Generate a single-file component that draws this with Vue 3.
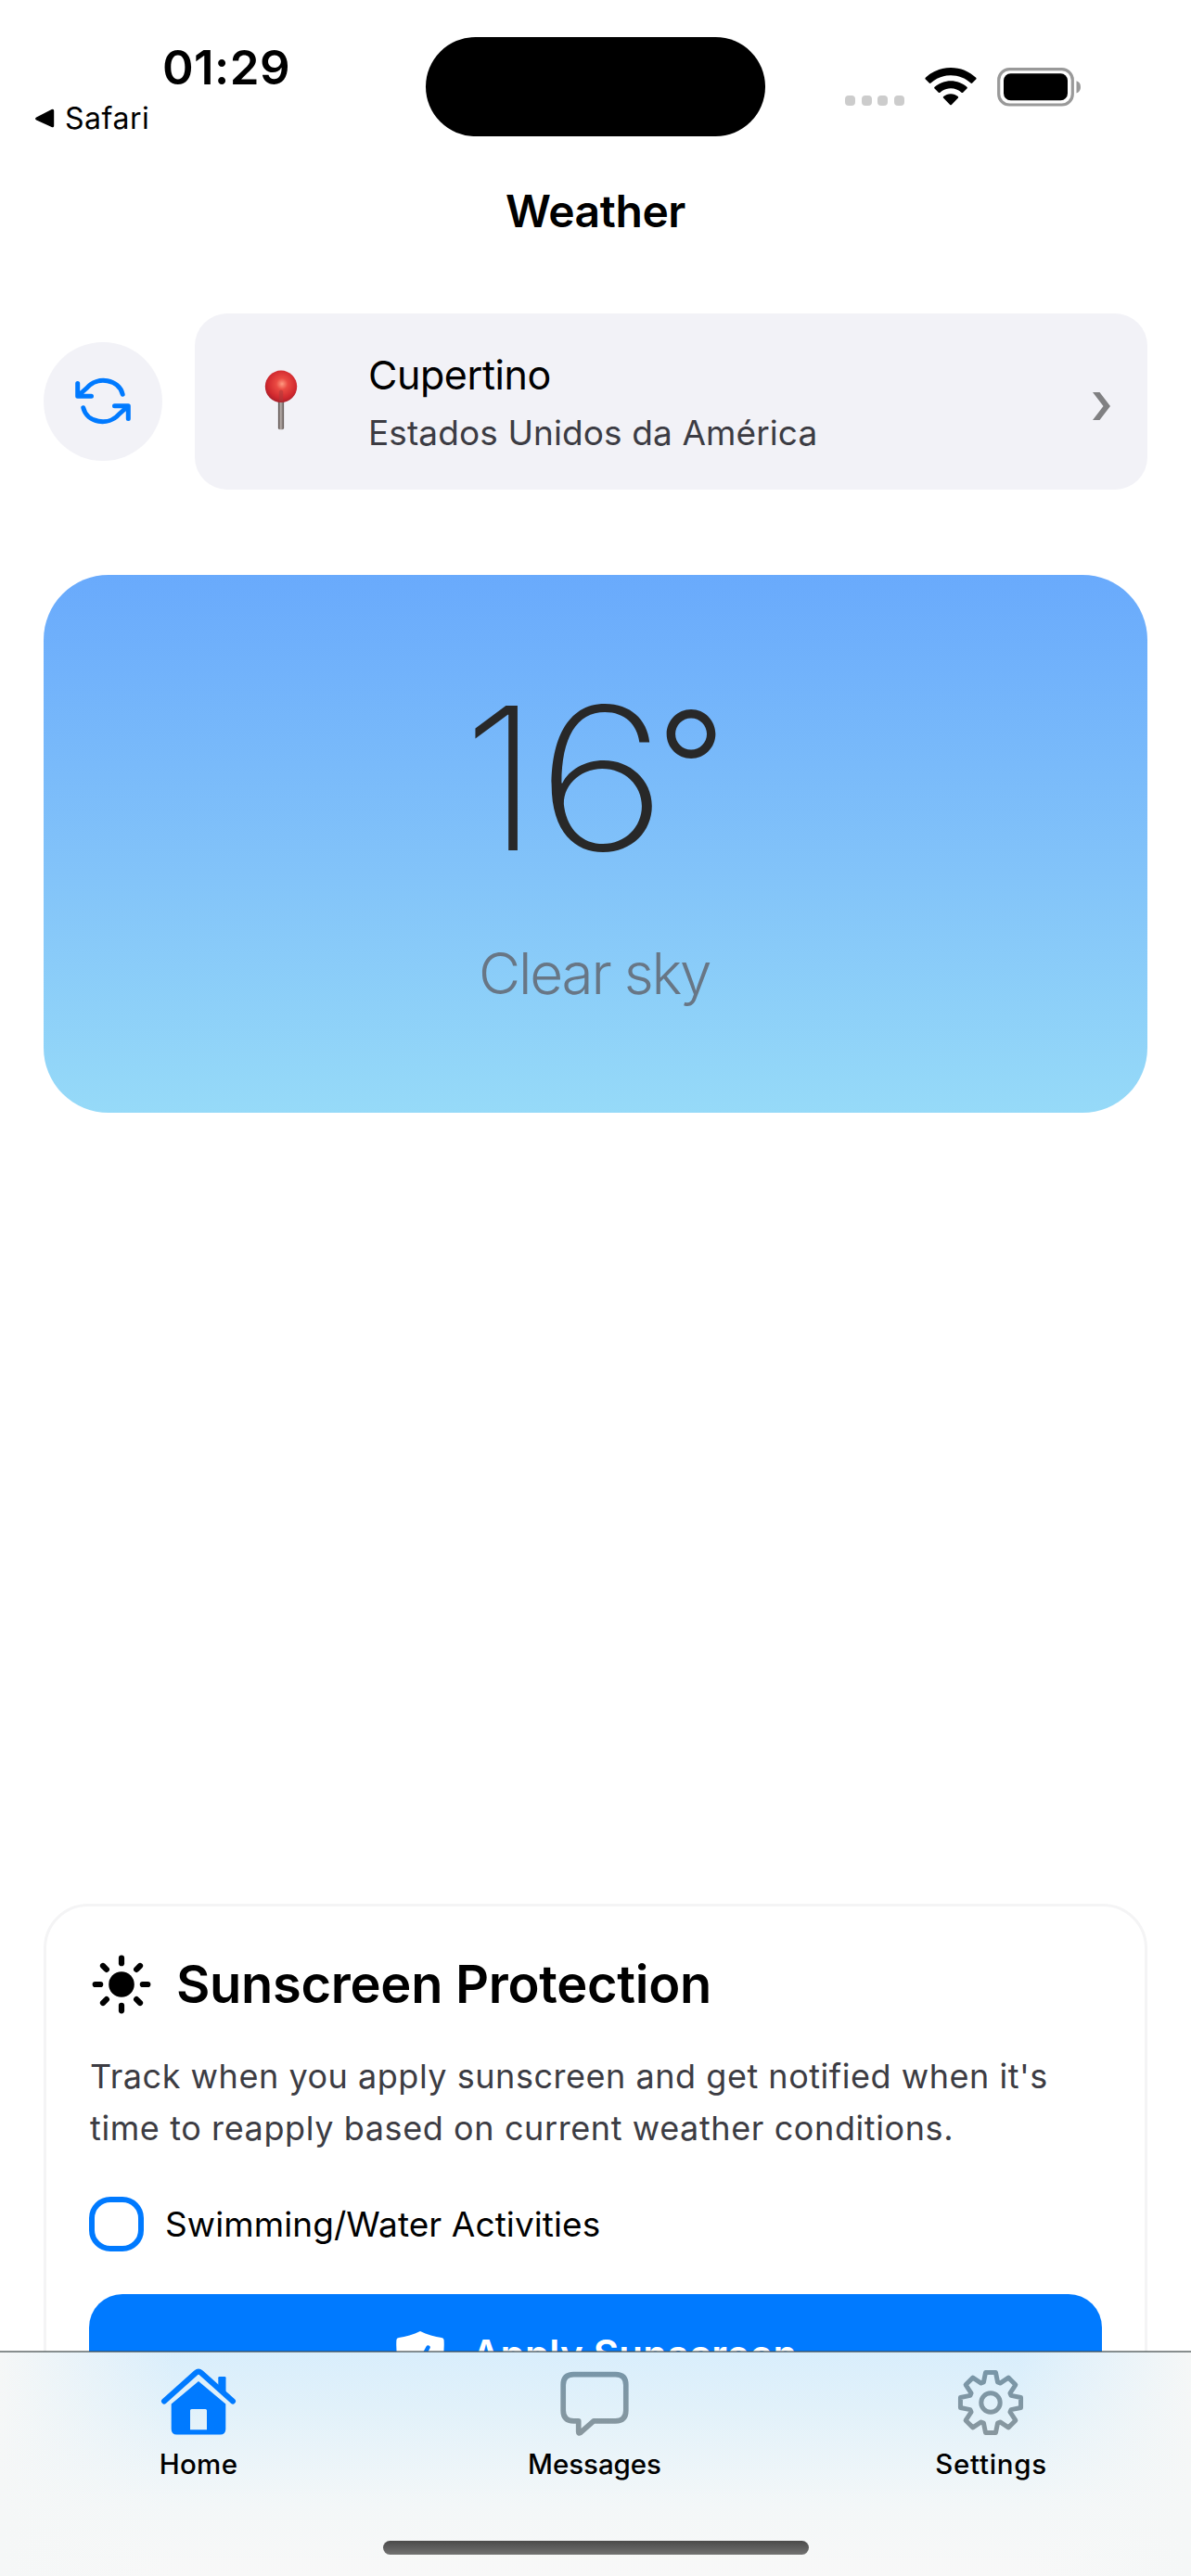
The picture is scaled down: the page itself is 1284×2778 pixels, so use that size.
<script setup>
const polar = (r, deg) => {
  const a = (deg * Math.PI) / 180
  return `${(36 + r * Math.sin(a)).toFixed(2)} ${(36 - r * Math.cos(a)).toFixed(2)}`
}

// Eight-toothed gear outline
const gearPath =
  'M' +
  Array.from({ length: 8 }, (_, i) => i * 45)
    .flatMap((t) => [polar(23.3, t - 19), polar(33, t - 9.5), polar(33, t + 9.5), polar(23.3, t + 19)])
    .join('L') +
  'Z'

const rays = Array.from({ length: 8 }, (_, i) => i * 45)
</script>

<template>
  <div class="screen">
    <header class="status">
      <div class="status-left">
        <div class="time">01:29</div>
        <div class="back">
          <svg width="22" height="22" viewBox="0 0 22 22">
            <path d="M2.500 10.200 19 1.600Q20.500 1 20.500 2.600V18.400Q20.500 20 19 19.400L2.500 11.800Q1 11 2.500 10.200Z" stroke="#000" stroke-width="1.400" />
          </svg>
          <span>Safari</span>
        </div>
      </div>
      <div class="island"></div>
      <div class="status-right">
        <div class="dots"><i></i><i></i><i></i><i></i></div>
        <svg class="wifi" width="56" height="41" viewBox="0 0 56 41">
          <path d="M28 0C17.500 0 8 4 .8 10.800Q0 11.600 .8 12.500L4.800 16.600Q5.600 17.400 6.500 16.600C12.300 11.300 19.700 8.300 28 8.300S43.700 11.300 49.500 16.600Q50.400 17.400 51.200 16.600L55.200 12.500Q56 11.600 55.200 10.800C48 4 38.500 0 28 0Z" />
          <path d="M28 14.200C21.400 14.200 15.300 16.600 10.600 20.800Q9.700 21.700 10.600 22.600L14.800 26.700Q15.600 27.500 16.500 26.700C19.600 24 23.600 22.300 28 22.300S36.400 24 39.500 26.700Q40.400 27.500 41.200 26.700L45.400 22.600Q46.300 21.700 45.400 20.800C40.700 16.600 34.600 14.200 28 14.200Z" />
          <path d="M28 28.200C25 28.200 22.300 29.300 20.200 31Q19.300 31.900 20.200 32.800L27.200 39.900Q28 40.700 28.800 39.900L35.800 32.800Q36.700 31.900 35.800 31C33.700 29.300 31 28.200 28 28.200Z" />
        </svg>
        <svg class="battery" width="91" height="42" viewBox="0 0 91 42">
          <rect x="1.700" y="1.700" width="79.600" height="38.300" rx="11.500" fill="none" stroke="#999" stroke-width="3.200" />
          <rect x="7" y="6.300" width="69" height="29" rx="7.500" />
          <path d="M85.500 14.200Q90 15.500 90 20.800T85.500 27.400Z" fill="#999" />
        </svg>
      </div>
    </header>

    <h1 class="title">Weather</h1>

    <main class="content">
      <section class="location-row">
        <button class="refresh" aria-label="Refresh">
          <svg width="60" height="50" viewBox="0 0 60 50" fill="none" stroke="#007aff" stroke-width="5" stroke-linecap="round" stroke-linejoin="round">
            <path d="M2.700 5.500V19.300H17.500M3.500 18.500L12.500 10.500C24-3 47.500 1 51.200 17.200" />
            <path d="M57.300 43.500V29.700H42.500M56.500 30.500L47.500 38.500C36 52 12.500 48 8.800 31.800" />
          </svg>
        </button>
        <div class="location">
          <svg class="pin" width="36" height="66" viewBox="0 0 36 66">
            <defs>
              <radialGradient id="pinHead" cx=".53" cy=".42" r=".6">
                <stop offset="0" stop-color="#ff9a80" />
                <stop offset=".3" stop-color="#ea4a42" />
                <stop offset=".75" stop-color="#d0282e" />
                <stop offset="1" stop-color="#a51f2a" />
              </radialGradient>
              <linearGradient id="pinStem">
                <stop offset="0" stop-color="#4f4543" />
                <stop offset=".45" stop-color="#b8aeaa" />
                <stop offset="1" stop-color="#5e5452" />
              </linearGradient>
            </defs>
            <rect x="14.900" y="31" width="6.200" height="33.300" rx="1.800" fill="url(#pinStem)" />
            <circle cx="18" cy="17.800" r="17.200" fill="url(#pinHead)" />
            <path d="M15.800 23Q18 20 20.200 23V34H15.800Z" fill="#a83a3c" opacity=".5" />
          </svg>
          <div class="place">
            <div class="city">Cupertino</div>
            <div class="country">Estados Unidos da América</div>
          </div>
          <svg class="chevron" width="19" height="30" viewBox="0 0 19 30">
            <path d="M0 0H7.500L19 15 7.500 30H0L11.500 15Z" fill="#808082" />
          </svg>
        </div>
      </section>

      <section class="weather">
        <div class="temp">1<span class="six">6</span><span class="degree">°</span></div>
        <div class="sky">Clear sky</div>
      </section>

      <section class="sun-card">
        <h2 class="sun-title">
          <svg width="64" height="64" viewBox="-32 -32 64 64">
            <circle r="13.800" />
            <line v-for="r in rays" :key="r" y1="-28.300" y2="-22.800" stroke="#000" stroke-width="6.200" stroke-linecap="round" :transform="`rotate(${r})`" />
          </svg>
          <span>Sunscreen Protection</span>
        </h2>
        <p class="desc">
          <span>Track when you apply sunscreen and get notified when it's</span><br />
          <span class="line-two">time to reapply based on current weather conditions.</span>
        </p>
        <label class="check"><i class="box"></i><span>Swimming/Water Activities</span></label>
        <button class="apply">
          <svg width="52" height="62" viewBox="0 0 52 62">
            <path d="M26 0C33 3.500 42 6.300 49 7Q51.500 7.300 51.600 9.500C53 34 45 54 26 61 7 54-1 34 .4 9.500Q.5 7.300 3 7C10 6.300 19 3.500 26 0Z" fill="#fff" />
            <path d="M17 31.500 23.500 38 34.500 17.500" fill="none" stroke="#007aff" stroke-width="4.500" stroke-linecap="round" stroke-linejoin="round" />
          </svg>
          <span>Apply Sunscreen</span>
        </button>
      </section>
    </main>

    <nav class="tabs">
      <a class="tab">
        <svg width="80" height="72" viewBox="0 0 80 72">
          <path d="M3 34.500 37.300 3.800Q40 1.500 42.700 3.800L77 34.500" fill="none" stroke="#007aff" stroke-width="6" stroke-linecap="round" />
          <path d="M61.300 9.200Q61.300 7.900 62.600 7.900H68.200Q69.500 7.900 69.500 9.200V28L61.300 21Z" fill="#007aff" />
          <path fill-rule="evenodd" d="M40 13 69.300 37.500V64.500Q69.300 70.500 63.300 70.500H16.700Q10.700 70.500 10.700 64.500V37.500ZM32.500 43Q31 43 31 44.500V65.300H49V44.500Q49 43 47.500 43Z" fill="#007aff" />
        </svg>
        <span class="t-home">Home</span>
      </a>
      <a class="tab messages">
        <svg width="80" height="72" viewBox="0 0 80 72" fill="none" stroke="url(#tint)" stroke-width="5.700" stroke-linejoin="round">
          <defs>
            <linearGradient id="tint" x1="0" y1="0" x2="0" y2="72" gradientUnits="userSpaceOnUse">
              <stop offset="0" stop-color="#7896a8" />
              <stop offset="1" stop-color="#89979e" />
            </linearGradient>
          </defs>
          <path d="M17.500 5.700H62.500Q73.800 5.700 73.800 17V44.500Q73.800 55.800 62.500 55.800H39L24.500 68.600Q22.700 69.600 22.700 67.500V55.800H17.500Q6.200 55.800 6.200 44.500V17Q6.200 5.700 17.500 5.700Z" />
        </svg>
        <span class="t-messages">Messages</span>
      </a>
      <a class="tab settings">
        <svg width="72" height="72" viewBox="0 0 72 72" fill="none" stroke="url(#tint)" stroke-width="5" stroke-linejoin="round">
          <path :d="gearPath" />
          <circle cx="36" cy="36" r="10.200" />
        </svg>
        <span class="t-settings">Settings</span>
      </a>
      <div class="home-bar"></div>
    </nav>
  </div>
</template>

<style>
body { background: #fff; }
</style>

<style scoped>
.screen {
  position: relative;
  width: 1284px;
  height: 2778px;
  overflow: hidden;
  background: #fff;
  color: #000;
  font-family: Inter, "Liberation Sans", sans-serif;
  white-space: nowrap;
}
svg { display: block; flex: none; overflow: visible; }
button { border: 0; padding: 0; font: inherit; }
.status { display: grid; grid-template-columns: 459px 366px 1fr; height: 198px; }
.status-left { padding-top: 43px; }
.time { padding-left: 175px; font-size: 51px; font-weight: 600; line-height: 60px; letter-spacing: .44px; }
.back { display: flex; align-items: center; gap: 11px; margin-top: 5px; padding-left: 37px; font-size: 32px; line-height: 40px; letter-spacing: .53px; }
.island { height: 107px; margin-top: 40px; border-radius: 54px; background: #000; }
.status-right { display: flex; align-items: flex-start; padding: 73px 0 0 86px; }
.dots { display: flex; gap: 6.600px; margin-top: 30px; }
.dots i { width: 11px; height: 11px; border-radius: 4px; background: #ccc; }
.wifi { margin-left: 22px; }
.battery { margin-left: 22px; }
.title { margin: 0; text-align: center; font-size: 48px; font-weight: 600; line-height: 60px; letter-spacing: -.4px; }
.content { padding: 80px 47px 0; }
.location-row { display: flex; align-items: center; gap: 35px; height: 190px; }
.refresh { display: grid; place-items: center; width: 128px; height: 128px; border-radius: 50%; background: #f2f2f7; }
.location { display: flex; align-items: center; flex: 1; height: 190px; padding: 0 40px 0 75px; border-radius: 35px; background: #f2f2f7; }
.pin { margin-top: -3px; }
.place { margin-left: 76px; padding-top: 2px; }
.city { font-size: 43px; line-height: 60px; letter-spacing: -.44px; }
.country { margin-top: 5px; font-size: 37px; line-height: 56px; letter-spacing: .1px; color: #3c3c43; }
.chevron { margin: 9px 0 0 auto; }
.weather { height: 580px; margin-top: 92px; border-radius: 70px; background: linear-gradient(#69aafc, #82c3f9 55%, #96daf8); }
.temp { height: 240px; padding: 100px 0 0 452px; font-size: 214px; font-weight: 200; line-height: 240px; color: #282828; }
.six { display: inline-block; transform: scaleX(1.13); transform-origin: 13px 50%; }
.degree { margin-left: 2px; font-size: 166px; font-weight: 300; line-height: 0; vertical-align: 30px; }
.sky { margin-top: 50px; padding-left: 469px; font-size: 62px; font-weight: 300; line-height: 80px; letter-spacing: -2.200px; color: #687685; }
.sun-card { box-sizing: border-box; height: 660px; margin-top: 853px; padding: 52px 46px; border: 3px solid #f4f4f5; border-radius: 48px; }
.sun-title { display: flex; align-items: center; gap: 27px; margin: 0; padding-left: 3px; font-size: 56px; font-weight: 600; line-height: 64px; letter-spacing: -.3px; }
.desc { margin: 39px 0 0; padding-left: 1px; font-size: 36px; line-height: 56px; letter-spacing: .53px; color: #3c3c43; }
.line-two { letter-spacing: .6px; }
.check { display: flex; align-items: center; gap: 23px; margin-top: 46px; font-size: 37px; line-height: 59px; letter-spacing: .08px; }
.box { box-sizing: border-box; width: 59px; height: 59px; border: 6px solid #007aff; border-radius: 23px; }
.apply { display: flex; align-items: flex-start; justify-content: center; gap: 30px; width: 100%; height: 140px; margin-top: 46px; padding: 40px 0 0 2px; border-radius: 36px; background: #007aff; color: #fff; font-size: 42px; font-weight: 600; line-height: 50px; letter-spacing: .25px; }
.tabs {
  position: absolute;
  left: 0;
  right: 0;
  bottom: 0;
  height: 242px;
  display: grid;
  grid-template-columns: repeat(3, 1fr);
  background:
    linear-gradient(90deg, #f5f7f7 0, #f5f7f700 190px, #f5f7f700 1100px, #f5f7f7 100%),
    linear-gradient(#d9eefc 0, #e1f1fa 60px, #eaf4f9 110px, #f3f7f8 165px, #f8f8f8 242px);
}
.tabs::before { content: ""; position: absolute; inset: -1px 0 auto; height: 1.500px; background: rgba(60, 70, 70, .6); }
.tab { display: flex; flex-direction: column; align-items: center; padding-top: 18.500px; font-size: 29.500px; font-weight: 500; line-height: 40px; }
.tab svg { margin-bottom: 10px; }
.messages { padding-right: 2px; }
.settings { padding-right: 3px; }
.settings svg { margin-right: 2px; }
.t-home { letter-spacing: .34px; }
.t-messages { letter-spacing: -.06px; }
.t-settings { letter-spacing: .7px; }
.home-bar { position: absolute; left: 413px; top: 204px; width: 459px; height: 15px; border-radius: 8px; background: linear-gradient(#4a4a4a, #727272); }
</style>
